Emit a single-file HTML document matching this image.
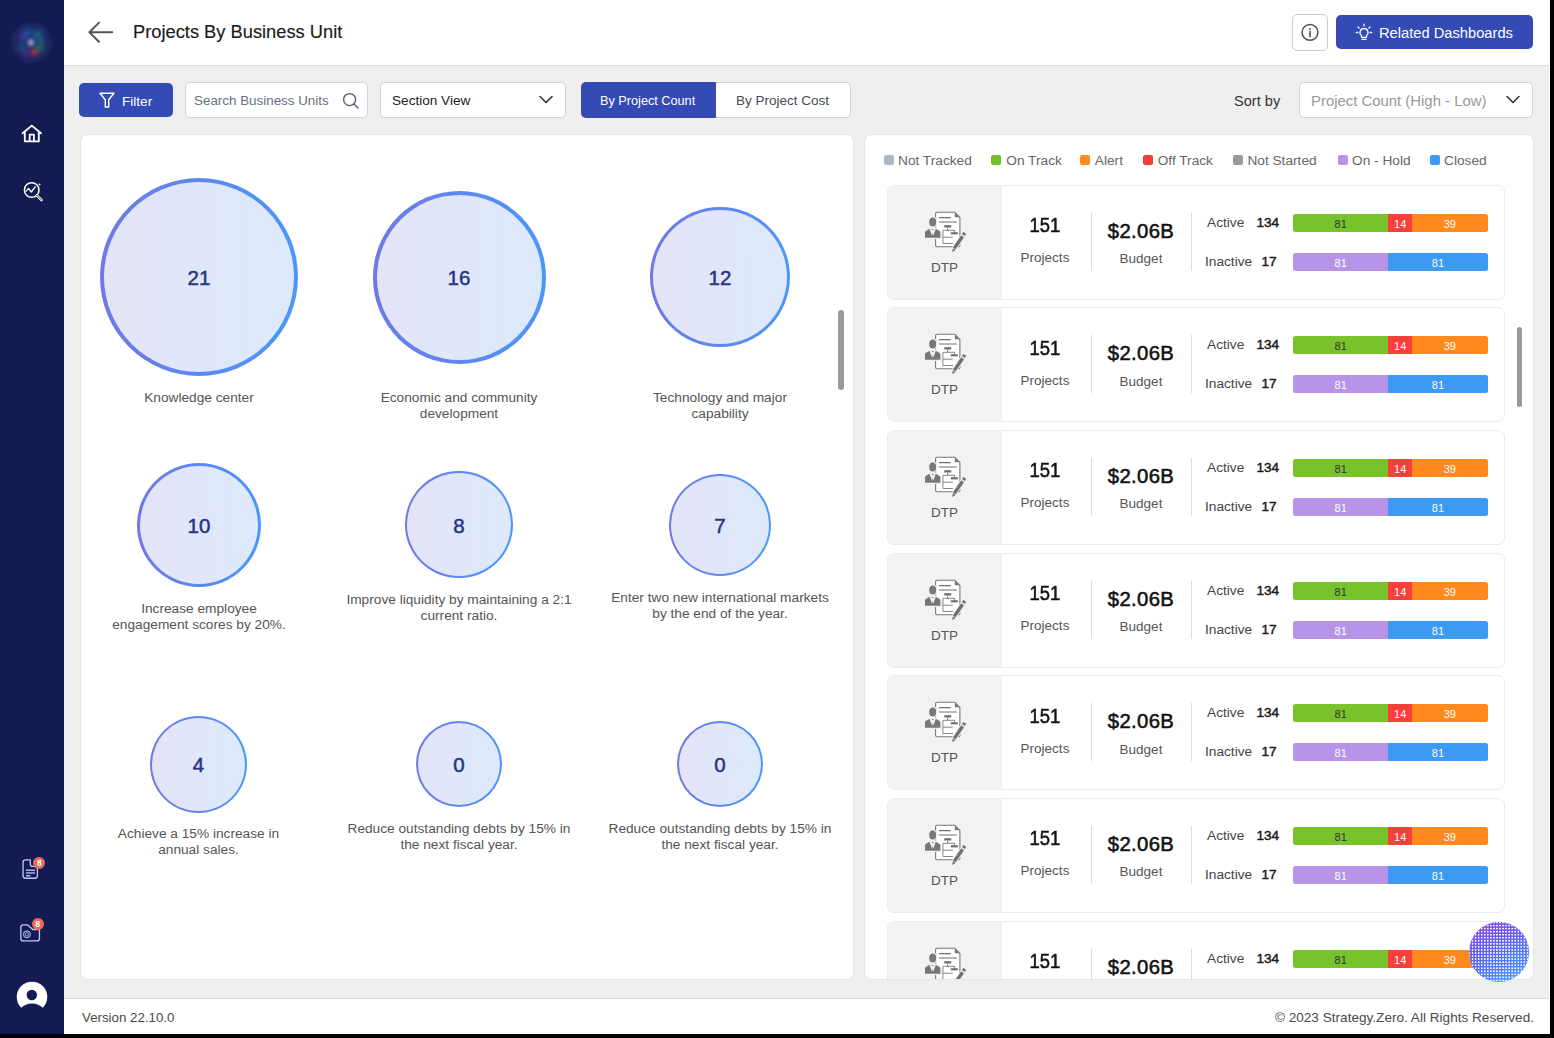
<!DOCTYPE html>
<html><head><meta charset="utf-8">
<style>
*{box-sizing:border-box;margin:0;padding:0}
html,body{width:1554px;height:1038px;overflow:hidden;background:#000;font-family:"Liberation Sans",sans-serif}
#app{position:absolute;left:0;top:0;width:1550px;height:1034px;background:#efefef;overflow:hidden}
.abs{position:absolute}
.t{position:absolute;white-space:nowrap}
#side{position:absolute;left:0;top:0;width:64px;height:1034px;background:#131b52}
#hdr{position:absolute;left:64px;top:0;width:1486px;height:66px;background:#fff;border-bottom:1px solid #dedede}
#ftr{position:absolute;left:64px;top:998px;width:1486px;height:36px;background:#fff;border-top:1px solid #d9d9d9}
.btnblue{position:absolute;background:#344ab4;border-radius:5px}
.box{position:absolute;background:#fff;border:1px solid #cfd3dc;border-radius:5px}
.panel{position:absolute;background:#fff;border-radius:7px;border:1px solid #e6e6e6}
.circ{position:absolute;border-radius:50%;border-style:solid;border-color:transparent;
 background:linear-gradient(90deg,#e4e4f8,#dde9fc) padding-box,linear-gradient(90deg,#6f78e6,#4b97fb) border-box;
 display:flex;align-items:center;justify-content:center;color:#263684;font-size:20.5px;-webkit-text-stroke:0.5px #263684;padding-top:2px}
.lbl{position:absolute;text-align:center;color:#555;font-size:13.7px;line-height:16px}
.card{position:absolute;width:618px;height:115px;border:1px solid #ebebeb;border-radius:7px;background:#fff;overflow:hidden}
.card .l{position:absolute;left:0;top:0;width:114px;height:113px;background:#f2f2f2}
.legt{font-size:13.7px;line-height:18px;color:#666;white-space:nowrap}
.ct{position:absolute;white-space:nowrap;line-height:20px}
.dtp{left:-1px;width:115px;text-align:center;top:72px;font-size:13.5px;color:#555}
.n151{left:107px;width:100px;text-align:center;top:29.5px;font-size:20.5px;color:#111;-webkit-text-stroke:0.55px #111;transform:scaleX(0.9)}
.sub{width:100px;text-align:center;top:62.5px;font-size:13.5px;color:#555}
.n2b{left:203px;width:100px;text-align:center;top:35px;font-size:20.3px;letter-spacing:0.35px;color:#111;-webkit-text-stroke:0.55px #111}
.dv{position:absolute;top:27px;width:1px;height:58px;background:#dcdcdc}
.act{left:319px;top:27px;font-size:13.7px;color:#444}
.bn{font-size:13.6px;color:#1a1a1a;-webkit-text-stroke:0.45px #1a1a1a}
.bar{position:absolute;left:405px;height:18px;width:194.6px;display:flex;border-radius:2.5px;overflow:hidden}
.bar i{display:block;height:18px;font-style:normal;font-size:11px;line-height:20px;text-align:center;color:#fff}
</style></head><body>
<div id="app">
  <div id="side"></div>
<div class="abs" style="left:11.399999999999999px;top:21.5px;width:41.0px;height:41.0px;border-radius:50%;background:rgba(75,85,160,0.2);filter:blur(1.2px)"></div>
<div class="abs" style="left:27.5px;top:39.4px;width:6.4px;height:6.4px;border-radius:50%;background:rgba(190,200,250,0.95);filter:blur(2px)"></div>
<div class="abs" style="left:23.8px;top:28.3px;width:8.4px;height:8.4px;border-radius:50%;background:rgba(25,95,190,0.75);filter:blur(2.5px)"></div>
<div class="abs" style="left:33.3px;top:30.3px;width:8.4px;height:8.4px;border-radius:50%;background:rgba(20,130,150,0.7);filter:blur(2.5px)"></div>
<div class="abs" style="left:35.0px;top:42.5px;width:9.0px;height:9.0px;border-radius:50%;background:rgba(25,140,100,0.7);filter:blur(2.5px)"></div>
<div class="abs" style="left:30.7px;top:48.2px;width:7.6px;height:7.6px;border-radius:50%;background:rgba(200,60,60,0.8);filter:blur(2.2px)"></div>
<div class="abs" style="left:23px;top:49px;width:8px;height:8px;border-radius:50%;background:rgba(95,50,160,0.6);filter:blur(2.5px)"></div>
<div class="abs" style="left:17.5px;top:42.5px;width:8px;height:8px;border-radius:50%;background:rgba(25,100,150,0.65);filter:blur(2.5px)"></div>
<div class="abs" style="left:18.5px;top:33px;width:8px;height:8px;border-radius:50%;background:rgba(100,100,190,0.45);filter:blur(2.5px)"></div>
<div class="abs" style="left:36.5px;top:37.0px;width:7.0px;height:7.0px;border-radius:50%;background:rgba(40,130,170,0.6);filter:blur(2.5px)"></div>
<svg class="abs" style="left:20px;top:123px" width="24" height="21" viewBox="0 0 24 21"><path d="M2.6 10.3L11.8 2.6L21 10.3M4.8 8.4V18.3H18.8V8.4M9.7 18.3V11.6H13.9V18.3" fill="none" stroke="#fff" stroke-width="1.8" stroke-linejoin="round" stroke-linecap="round"/></svg>
<svg class="abs" style="left:20px;top:178px" width="26" height="26" viewBox="0 0 26 26"><circle cx="11.7" cy="12" r="7.3" fill="none" stroke="#fff" stroke-width="1.5"/><path d="M16.8 17.3L21.6 22.1" stroke="#fff" stroke-width="2.6" stroke-linecap="round"/><path d="M16.8 17.3L21.6 22.1" stroke="#131b52" stroke-width="0.9" stroke-linecap="round"/><path d="M5.6 13.6L8.6 10.4L11.3 14L15.6 8.4" fill="none" stroke="#fff" stroke-width="1.3" stroke-linejoin="round"/><circle cx="19.6" cy="6.4" r="0.9" fill="#fff"/></svg>
<svg class="abs" style="left:18px;top:855px" width="30" height="30" viewBox="0 0 30 30"><path d="M12.3 4.85H7.5Q5.05 4.85 5.05 7.3V20.8Q5.05 23.25 7.5 23.25H16.9Q19.35 23.25 19.35 20.8V11.4H14.8Q12.3 11.4 12.3 8.9Z" fill="none" stroke="#c3c9f2" stroke-width="1.3" stroke-linejoin="round"/><path d="M8 15.2H17M8 18H17M8 20.7H12.6" stroke="#aab3ee" stroke-width="1.5"/></svg>
<div class="abs" style="left:33.3px;top:857px;width:12px;height:12px;border-radius:50%;background:#ec6a56;color:#fff;font-size:8.5px;line-height:12px;text-align:center;font-weight:bold">8</div>
<svg class="abs" style="left:17px;top:920px" width="30" height="26" viewBox="0 0 30 26"><path d="M10.4 4.85H6.3Q3.85 4.85 3.85 7.3V18.5Q3.85 20.95 6.3 20.95H20Q22.45 20.95 22.45 18.5V9.5H15.7Z" fill="none" stroke="#c3c9f2" stroke-width="1.3" stroke-linejoin="round"/><circle cx="9.9" cy="14.3" r="1.7" fill="none" stroke="#aab3ee" stroke-width="0.9"/><circle cx="9.9" cy="14.3" r="3.3" fill="none" stroke="#aab3ee" stroke-width="1.1"/></svg>
<div class="abs" style="left:31.7px;top:918.3px;width:12px;height:12px;border-radius:50%;background:#ec6a56;color:#fff;font-size:8.5px;line-height:12px;text-align:center;font-weight:bold">8</div>
<svg class="abs" style="left:16px;top:979px" width="32" height="32" viewBox="0 0 32 32"><circle cx="16" cy="17.9" r="15.25" fill="#fff"/><circle cx="15.8" cy="16" r="5.2" fill="#131b52"/><circle cx="16" cy="40.5" r="16" fill="#131b52"/></svg>
  <div id="hdr"></div>
  <svg class="abs" style="left:86px;top:20px" width="30" height="25" viewBox="0 0 30 25"><path d="M26.3 12.2H3.8M13 2.6L3.4 12.2L13 21.8" fill="none" stroke="#555" stroke-width="2" stroke-linecap="round" stroke-linejoin="round"/></svg>
  <div class="t" style="left:133px;top:20.4px;font-size:18.3px;line-height:24px;color:#1a1a1a;-webkit-text-stroke:0.15px #1a1a1a">Projects By Business Unit</div>
  <div class="box" style="left:1292px;top:14px;width:36px;height:37px;border-color:#c9ccd6"></div>
  <svg class="abs" style="left:1300px;top:22px" width="20" height="20" viewBox="0 0 20 20"><circle cx="10" cy="10.4" r="7.9" fill="none" stroke="#4a5060" stroke-width="1.5"/><circle cx="10" cy="7" r="1" fill="#4a5060"/><path d="M10 9.6v5.2" stroke="#4a5060" stroke-width="1.6" stroke-linecap="round"/></svg>
  <div class="btnblue" style="left:1336px;top:15px;width:197px;height:34px"></div>
  <svg class="abs" style="left:1354px;top:22px" width="20" height="20" viewBox="0 0 20 20"><g fill="none" stroke="#fff" stroke-width="1.3" stroke-linecap="round"><path d="M10 6.5a4 4 0 0 0-2.4 7.2v1.6h4.8v-1.6A4 4 0 0 0 10 6.5z"/><path d="M8 17.3h4"/><path d="M10 2.2v1.6M4 5l1.1 1.1M16 5l-1.1 1.1M2.3 10.5h1.5M16.2 10.5h1.5"/></g></svg>
  <div class="t" style="left:1379px;top:23.7px;font-size:14.7px;line-height:18px;color:#fff">Related Dashboards</div>
  <div class="btnblue" style="left:79px;top:83px;width:94px;height:34px"></div>
  <svg class="abs" style="left:98px;top:91px" width="18" height="18" viewBox="0 0 18 18"><path d="M2 2.2h14l-5.3 6.6v7.2H7.3V8.8z" fill="none" stroke="#fff" stroke-width="1.4" stroke-linejoin="round"/></svg>
  <div class="t" style="left:122px;top:92.5px;font-size:13.6px;line-height:18px;color:#fff">Filter</div>
  <div class="box" style="left:185px;top:82px;width:183px;height:36px"></div>
  <div class="t" style="left:194px;top:91.7px;font-size:13.4px;line-height:18px;color:#667085">Search Business Units</div>
  <svg class="abs" style="left:341px;top:91px" width="20" height="20" viewBox="0 0 20 20"><circle cx="8.6" cy="8.6" r="6" fill="none" stroke="#555d6e" stroke-width="1.4"/><path d="M13 13l4 4" stroke="#555d6e" stroke-width="1.4" stroke-linecap="round"/></svg>
  <div class="box" style="left:380px;top:82px;width:186px;height:36px"></div>
  <div class="t" style="left:392px;top:92px;font-size:13.6px;line-height:18px;color:#222">Section View</div>
  <svg class="abs" style="left:538px;top:93px" width="16" height="14" viewBox="0 0 16 14"><path d="M2 3.5l6 6l6-6" fill="none" stroke="#333" stroke-width="1.6" stroke-linecap="round" stroke-linejoin="round"/></svg>
  <div class="box" style="left:581px;top:82px;width:270px;height:36px"></div>
  <div class="abs" style="left:581px;top:82px;width:135px;height:36px;background:#344ab4;border-radius:5px 0 0 5px"></div>
  <div class="t" style="left:600px;top:92px;font-size:12.7px;line-height:18px;color:#fff">By Project Count</div>
  <div class="t" style="left:736px;top:91.6px;font-size:13.5px;line-height:18px;color:#444b5a">By Project Cost</div>
  <div class="t" style="left:1234px;top:91.6px;font-size:14.6px;line-height:18px;color:#333">Sort by</div>
  <div class="box" style="left:1299px;top:82px;width:234px;height:36px"></div>
  <div class="t" style="left:1311px;top:91.5px;font-size:14.9px;line-height:18px;color:#999">Project Count (High - Low)</div>
  <svg class="abs" style="left:1505px;top:93px" width="16" height="14" viewBox="0 0 16 14"><path d="M2 3.5l6 6l6-6" fill="none" stroke="#333" stroke-width="1.6" stroke-linecap="round" stroke-linejoin="round"/></svg>
  <div id="ftr"></div>
  <div class="t" style="left:82px;top:1009px;font-size:13.3px;line-height:18px;color:#4a4a4a">Version 22.10.0</div>
  <div class="t" style="left:1272px;top:1009px;width:262px;text-align:right;font-size:13.6px;line-height:18px;color:#4a4a4a">© 2023 Strategy.Zero. All Rights Reserved.</div>
  <div class="panel" style="left:80px;top:134px;width:774px;height:846px"></div>
  <div class="circ" style="left:100.00px;top:178.00px;width:198px;height:198px;border-width:4.95px">21</div>
  <div class="lbl" style="left:69px;top:389.5px;width:260px">Knowledge center</div>
  <div class="circ" style="left:372.50px;top:190.50px;width:173px;height:173px;border-width:4.33px">16</div>
  <div class="lbl" style="left:329px;top:389.5px;width:260px">Economic and community<br>development</div>
  <div class="circ" style="left:650.00px;top:207.00px;width:140px;height:140px;border-width:3.5px">12</div>
  <div class="lbl" style="left:590px;top:389.5px;width:260px">Technology and major<br>capability</div>
  <div class="circ" style="left:137.00px;top:462.50px;width:124px;height:124px;border-width:3.1px">10</div>
  <div class="lbl" style="left:69px;top:600.5px;width:260px">Increase employee<br>engagement scores by 20%.</div>
  <div class="circ" style="left:405.25px;top:470.75px;width:107.5px;height:107.5px;border-width:2.69px">8</div>
  <div class="lbl" style="left:329px;top:591.5px;width:260px">Improve liquidity by maintaining a 2:1<br>current ratio.</div>
  <div class="circ" style="left:668.75px;top:473.55px;width:102.5px;height:102.5px;border-width:2.56px">7</div>
  <div class="lbl" style="left:590px;top:589.5px;width:260px">Enter two new international markets<br>by the end of the year.</div>
  <div class="circ" style="left:150.00px;top:715.50px;width:97px;height:97px;border-width:2.43px">4</div>
  <div class="lbl" style="left:68.5px;top:826.0px;width:260px">Achieve a 15% increase in<br>annual sales.</div>
  <div class="circ" style="left:416.00px;top:721.00px;width:86px;height:86px;border-width:2.15px">0</div>
  <div class="lbl" style="left:329px;top:821.1px;width:260px">Reduce outstanding debts by 15% in<br>the next fiscal year.</div>
  <div class="circ" style="left:677.00px;top:721.00px;width:86px;height:86px;border-width:2.15px">0</div>
  <div class="lbl" style="left:590px;top:821.1px;width:260px">Reduce outstanding debts by 15% in<br>the next fiscal year.</div>
  <div class="abs" style="left:838px;top:310px;width:6px;height:80px;border-radius:3px;background:#9a9a9a"></div>
  <div class="panel" style="left:864px;top:134px;width:670px;height:846px"></div>
  <div class="abs" style="left:865px;top:135px;width:668px;height:844px;overflow:hidden;border-radius:6px"><div class="abs" style="left:-865px;top:-135px;width:1550px;height:1033px">
  <div class="abs" style="left:884px;top:155px;width:10px;height:10px;border-radius:2px;background:#a9b8c4"></div>
  <div class="abs legt" style="left:898px;top:151.7px">Not Tracked</div>
  <div class="abs" style="left:991.4px;top:155px;width:10px;height:10px;border-radius:2px;background:#72c02c"></div>
  <div class="abs legt" style="left:1006.3px;top:151.7px">On Track</div>
  <div class="abs" style="left:1080.2px;top:155px;width:10px;height:10px;border-radius:2px;background:#ff8a1f"></div>
  <div class="abs legt" style="left:1094.8px;top:151.7px">Alert</div>
  <div class="abs" style="left:1143px;top:155px;width:10px;height:10px;border-radius:2px;background:#f53b35"></div>
  <div class="abs legt" style="left:1157.7px;top:151.7px">Off Track</div>
  <div class="abs" style="left:1233px;top:155px;width:10px;height:10px;border-radius:2px;background:#9a9a9a"></div>
  <div class="abs legt" style="left:1247.4px;top:151.7px">Not Started</div>
  <div class="abs" style="left:1337.6px;top:155px;width:10px;height:10px;border-radius:2px;background:#b894e8"></div>
  <div class="abs legt" style="left:1352px;top:151.7px">On - Hold</div>
  <div class="abs" style="left:1429.6px;top:155px;width:10px;height:10px;border-radius:2px;background:#3d9bf3"></div>
  <div class="abs legt" style="left:1444px;top:151.7px">Closed</div>
  <div class="card" style="left:887px;top:184.60px"><div class="l"></div><svg class="abs" style="left:29.5px;top:19px" width="54" height="50" viewBox="0 0 54 50"><g stroke-linecap="butt">
<path d="M17.6 8.6Q17.6 7.2 19 7.2H36.8L41.9 12.5V40.3Q41.9 41.7 40.5 41.7H19Q17.6 41.7 17.6 40.3Z" fill="#fff" stroke="#777" stroke-width="1.1"/>
<path d="M36.8 7.4V12.2H41.6Z" fill="#777"/>
<path d="M21 12.6H32.7M21 17H38.8" stroke="#6f6f6f" stroke-width="1.1"/>
<rect x="26.2" y="20.2" width="7" height="2.3" fill="#707070"/>
<path d="M29.6 22.5V25.3M24.9 25.3H36.6V27.4M24.9 25.3V38.5H35M25 32.2H34.8" fill="none" stroke="#777" stroke-width="0.9"/>
<rect x="32.8" y="27.2" width="7" height="2.2" fill="#707070"/>
<ellipse cx="14.7" cy="16.9" rx="4.2" ry="5.2" fill="#777" stroke="#f2f2f2" stroke-width="1.4"/>
<path d="M6.4 33.4V27.2Q6.5 25.9 7.8 25.2L11.8 23L13.9 28.6L14.6 25.2L15.4 28.6L17.4 23L21.5 25.3Q23 26 23 27.4V33.4Z" fill="#777" stroke="#f2f2f2" stroke-width="1.2"/>
<path d="M14 24.5h1.4" stroke="#777" stroke-width="1.2"/>
<path d="M36.3 43.4L44.6 31.2" stroke="#f2f2f2" stroke-width="5.2"/>
<path d="M36.3 43.4L44.6 31.2" stroke="#707070" stroke-width="3.4"/>
<path d="M45.4 30L46.8 27.9" stroke="#707070" stroke-width="3.4"/>
<path d="M34 47L35 43.2L37.7 45Z" fill="#707070"/>
</g></svg>
<div class="ct dtp">DTP</div><div class="ct n151">151</div><div class="ct sub" style="left:107px">Projects</div>
<div class="dv" style="left:202.5px"></div><div class="ct n2b">$2.06B</div><div class="ct sub" style="left:203px;top:63.5px">Budget</div>
<div class="dv" style="left:302.5px"></div>
<div class="ct act">Active</div><div class="ct bn" style="left:368.5px;top:27px">134</div>
<div class="ct act" style="left:317px;top:66px">Inactive</div><div class="ct bn" style="left:373.5px;top:66px">17</div>
<div class="bar" style="top:28px"><i style="width:95.4px;background:#78c22b;color:#333">81</i><i style="width:23.6px;background:#f63f38">14</i><i style="width:75.6px;background:#fe891e">39</i></div>
<div class="bar" style="top:67.2px"><i style="width:95.4px;background:#b894e8">81</i><i style="width:99.2px;background:#3c9af2">81</i></div>
</div>
  <div class="card" style="left:887px;top:307.27px"><div class="l"></div><svg class="abs" style="left:29.5px;top:19px" width="54" height="50" viewBox="0 0 54 50"><g stroke-linecap="butt">
<path d="M17.6 8.6Q17.6 7.2 19 7.2H36.8L41.9 12.5V40.3Q41.9 41.7 40.5 41.7H19Q17.6 41.7 17.6 40.3Z" fill="#fff" stroke="#777" stroke-width="1.1"/>
<path d="M36.8 7.4V12.2H41.6Z" fill="#777"/>
<path d="M21 12.6H32.7M21 17H38.8" stroke="#6f6f6f" stroke-width="1.1"/>
<rect x="26.2" y="20.2" width="7" height="2.3" fill="#707070"/>
<path d="M29.6 22.5V25.3M24.9 25.3H36.6V27.4M24.9 25.3V38.5H35M25 32.2H34.8" fill="none" stroke="#777" stroke-width="0.9"/>
<rect x="32.8" y="27.2" width="7" height="2.2" fill="#707070"/>
<ellipse cx="14.7" cy="16.9" rx="4.2" ry="5.2" fill="#777" stroke="#f2f2f2" stroke-width="1.4"/>
<path d="M6.4 33.4V27.2Q6.5 25.9 7.8 25.2L11.8 23L13.9 28.6L14.6 25.2L15.4 28.6L17.4 23L21.5 25.3Q23 26 23 27.4V33.4Z" fill="#777" stroke="#f2f2f2" stroke-width="1.2"/>
<path d="M14 24.5h1.4" stroke="#777" stroke-width="1.2"/>
<path d="M36.3 43.4L44.6 31.2" stroke="#f2f2f2" stroke-width="5.2"/>
<path d="M36.3 43.4L44.6 31.2" stroke="#707070" stroke-width="3.4"/>
<path d="M45.4 30L46.8 27.9" stroke="#707070" stroke-width="3.4"/>
<path d="M34 47L35 43.2L37.7 45Z" fill="#707070"/>
</g></svg>
<div class="ct dtp">DTP</div><div class="ct n151">151</div><div class="ct sub" style="left:107px">Projects</div>
<div class="dv" style="left:202.5px"></div><div class="ct n2b">$2.06B</div><div class="ct sub" style="left:203px;top:63.5px">Budget</div>
<div class="dv" style="left:302.5px"></div>
<div class="ct act">Active</div><div class="ct bn" style="left:368.5px;top:27px">134</div>
<div class="ct act" style="left:317px;top:66px">Inactive</div><div class="ct bn" style="left:373.5px;top:66px">17</div>
<div class="bar" style="top:28px"><i style="width:95.4px;background:#78c22b;color:#333">81</i><i style="width:23.6px;background:#f63f38">14</i><i style="width:75.6px;background:#fe891e">39</i></div>
<div class="bar" style="top:67.2px"><i style="width:95.4px;background:#b894e8">81</i><i style="width:99.2px;background:#3c9af2">81</i></div>
</div>
  <div class="card" style="left:887px;top:429.94px"><div class="l"></div><svg class="abs" style="left:29.5px;top:19px" width="54" height="50" viewBox="0 0 54 50"><g stroke-linecap="butt">
<path d="M17.6 8.6Q17.6 7.2 19 7.2H36.8L41.9 12.5V40.3Q41.9 41.7 40.5 41.7H19Q17.6 41.7 17.6 40.3Z" fill="#fff" stroke="#777" stroke-width="1.1"/>
<path d="M36.8 7.4V12.2H41.6Z" fill="#777"/>
<path d="M21 12.6H32.7M21 17H38.8" stroke="#6f6f6f" stroke-width="1.1"/>
<rect x="26.2" y="20.2" width="7" height="2.3" fill="#707070"/>
<path d="M29.6 22.5V25.3M24.9 25.3H36.6V27.4M24.9 25.3V38.5H35M25 32.2H34.8" fill="none" stroke="#777" stroke-width="0.9"/>
<rect x="32.8" y="27.2" width="7" height="2.2" fill="#707070"/>
<ellipse cx="14.7" cy="16.9" rx="4.2" ry="5.2" fill="#777" stroke="#f2f2f2" stroke-width="1.4"/>
<path d="M6.4 33.4V27.2Q6.5 25.9 7.8 25.2L11.8 23L13.9 28.6L14.6 25.2L15.4 28.6L17.4 23L21.5 25.3Q23 26 23 27.4V33.4Z" fill="#777" stroke="#f2f2f2" stroke-width="1.2"/>
<path d="M14 24.5h1.4" stroke="#777" stroke-width="1.2"/>
<path d="M36.3 43.4L44.6 31.2" stroke="#f2f2f2" stroke-width="5.2"/>
<path d="M36.3 43.4L44.6 31.2" stroke="#707070" stroke-width="3.4"/>
<path d="M45.4 30L46.8 27.9" stroke="#707070" stroke-width="3.4"/>
<path d="M34 47L35 43.2L37.7 45Z" fill="#707070"/>
</g></svg>
<div class="ct dtp">DTP</div><div class="ct n151">151</div><div class="ct sub" style="left:107px">Projects</div>
<div class="dv" style="left:202.5px"></div><div class="ct n2b">$2.06B</div><div class="ct sub" style="left:203px;top:63.5px">Budget</div>
<div class="dv" style="left:302.5px"></div>
<div class="ct act">Active</div><div class="ct bn" style="left:368.5px;top:27px">134</div>
<div class="ct act" style="left:317px;top:66px">Inactive</div><div class="ct bn" style="left:373.5px;top:66px">17</div>
<div class="bar" style="top:28px"><i style="width:95.4px;background:#78c22b;color:#333">81</i><i style="width:23.6px;background:#f63f38">14</i><i style="width:75.6px;background:#fe891e">39</i></div>
<div class="bar" style="top:67.2px"><i style="width:95.4px;background:#b894e8">81</i><i style="width:99.2px;background:#3c9af2">81</i></div>
</div>
  <div class="card" style="left:887px;top:552.61px"><div class="l"></div><svg class="abs" style="left:29.5px;top:19px" width="54" height="50" viewBox="0 0 54 50"><g stroke-linecap="butt">
<path d="M17.6 8.6Q17.6 7.2 19 7.2H36.8L41.9 12.5V40.3Q41.9 41.7 40.5 41.7H19Q17.6 41.7 17.6 40.3Z" fill="#fff" stroke="#777" stroke-width="1.1"/>
<path d="M36.8 7.4V12.2H41.6Z" fill="#777"/>
<path d="M21 12.6H32.7M21 17H38.8" stroke="#6f6f6f" stroke-width="1.1"/>
<rect x="26.2" y="20.2" width="7" height="2.3" fill="#707070"/>
<path d="M29.6 22.5V25.3M24.9 25.3H36.6V27.4M24.9 25.3V38.5H35M25 32.2H34.8" fill="none" stroke="#777" stroke-width="0.9"/>
<rect x="32.8" y="27.2" width="7" height="2.2" fill="#707070"/>
<ellipse cx="14.7" cy="16.9" rx="4.2" ry="5.2" fill="#777" stroke="#f2f2f2" stroke-width="1.4"/>
<path d="M6.4 33.4V27.2Q6.5 25.9 7.8 25.2L11.8 23L13.9 28.6L14.6 25.2L15.4 28.6L17.4 23L21.5 25.3Q23 26 23 27.4V33.4Z" fill="#777" stroke="#f2f2f2" stroke-width="1.2"/>
<path d="M14 24.5h1.4" stroke="#777" stroke-width="1.2"/>
<path d="M36.3 43.4L44.6 31.2" stroke="#f2f2f2" stroke-width="5.2"/>
<path d="M36.3 43.4L44.6 31.2" stroke="#707070" stroke-width="3.4"/>
<path d="M45.4 30L46.8 27.9" stroke="#707070" stroke-width="3.4"/>
<path d="M34 47L35 43.2L37.7 45Z" fill="#707070"/>
</g></svg>
<div class="ct dtp">DTP</div><div class="ct n151">151</div><div class="ct sub" style="left:107px">Projects</div>
<div class="dv" style="left:202.5px"></div><div class="ct n2b">$2.06B</div><div class="ct sub" style="left:203px;top:63.5px">Budget</div>
<div class="dv" style="left:302.5px"></div>
<div class="ct act">Active</div><div class="ct bn" style="left:368.5px;top:27px">134</div>
<div class="ct act" style="left:317px;top:66px">Inactive</div><div class="ct bn" style="left:373.5px;top:66px">17</div>
<div class="bar" style="top:28px"><i style="width:95.4px;background:#78c22b;color:#333">81</i><i style="width:23.6px;background:#f63f38">14</i><i style="width:75.6px;background:#fe891e">39</i></div>
<div class="bar" style="top:67.2px"><i style="width:95.4px;background:#b894e8">81</i><i style="width:99.2px;background:#3c9af2">81</i></div>
</div>
  <div class="card" style="left:887px;top:675.28px"><div class="l"></div><svg class="abs" style="left:29.5px;top:19px" width="54" height="50" viewBox="0 0 54 50"><g stroke-linecap="butt">
<path d="M17.6 8.6Q17.6 7.2 19 7.2H36.8L41.9 12.5V40.3Q41.9 41.7 40.5 41.7H19Q17.6 41.7 17.6 40.3Z" fill="#fff" stroke="#777" stroke-width="1.1"/>
<path d="M36.8 7.4V12.2H41.6Z" fill="#777"/>
<path d="M21 12.6H32.7M21 17H38.8" stroke="#6f6f6f" stroke-width="1.1"/>
<rect x="26.2" y="20.2" width="7" height="2.3" fill="#707070"/>
<path d="M29.6 22.5V25.3M24.9 25.3H36.6V27.4M24.9 25.3V38.5H35M25 32.2H34.8" fill="none" stroke="#777" stroke-width="0.9"/>
<rect x="32.8" y="27.2" width="7" height="2.2" fill="#707070"/>
<ellipse cx="14.7" cy="16.9" rx="4.2" ry="5.2" fill="#777" stroke="#f2f2f2" stroke-width="1.4"/>
<path d="M6.4 33.4V27.2Q6.5 25.9 7.8 25.2L11.8 23L13.9 28.6L14.6 25.2L15.4 28.6L17.4 23L21.5 25.3Q23 26 23 27.4V33.4Z" fill="#777" stroke="#f2f2f2" stroke-width="1.2"/>
<path d="M14 24.5h1.4" stroke="#777" stroke-width="1.2"/>
<path d="M36.3 43.4L44.6 31.2" stroke="#f2f2f2" stroke-width="5.2"/>
<path d="M36.3 43.4L44.6 31.2" stroke="#707070" stroke-width="3.4"/>
<path d="M45.4 30L46.8 27.9" stroke="#707070" stroke-width="3.4"/>
<path d="M34 47L35 43.2L37.7 45Z" fill="#707070"/>
</g></svg>
<div class="ct dtp">DTP</div><div class="ct n151">151</div><div class="ct sub" style="left:107px">Projects</div>
<div class="dv" style="left:202.5px"></div><div class="ct n2b">$2.06B</div><div class="ct sub" style="left:203px;top:63.5px">Budget</div>
<div class="dv" style="left:302.5px"></div>
<div class="ct act">Active</div><div class="ct bn" style="left:368.5px;top:27px">134</div>
<div class="ct act" style="left:317px;top:66px">Inactive</div><div class="ct bn" style="left:373.5px;top:66px">17</div>
<div class="bar" style="top:28px"><i style="width:95.4px;background:#78c22b;color:#333">81</i><i style="width:23.6px;background:#f63f38">14</i><i style="width:75.6px;background:#fe891e">39</i></div>
<div class="bar" style="top:67.2px"><i style="width:95.4px;background:#b894e8">81</i><i style="width:99.2px;background:#3c9af2">81</i></div>
</div>
  <div class="card" style="left:887px;top:797.95px"><div class="l"></div><svg class="abs" style="left:29.5px;top:19px" width="54" height="50" viewBox="0 0 54 50"><g stroke-linecap="butt">
<path d="M17.6 8.6Q17.6 7.2 19 7.2H36.8L41.9 12.5V40.3Q41.9 41.7 40.5 41.7H19Q17.6 41.7 17.6 40.3Z" fill="#fff" stroke="#777" stroke-width="1.1"/>
<path d="M36.8 7.4V12.2H41.6Z" fill="#777"/>
<path d="M21 12.6H32.7M21 17H38.8" stroke="#6f6f6f" stroke-width="1.1"/>
<rect x="26.2" y="20.2" width="7" height="2.3" fill="#707070"/>
<path d="M29.6 22.5V25.3M24.9 25.3H36.6V27.4M24.9 25.3V38.5H35M25 32.2H34.8" fill="none" stroke="#777" stroke-width="0.9"/>
<rect x="32.8" y="27.2" width="7" height="2.2" fill="#707070"/>
<ellipse cx="14.7" cy="16.9" rx="4.2" ry="5.2" fill="#777" stroke="#f2f2f2" stroke-width="1.4"/>
<path d="M6.4 33.4V27.2Q6.5 25.9 7.8 25.2L11.8 23L13.9 28.6L14.6 25.2L15.4 28.6L17.4 23L21.5 25.3Q23 26 23 27.4V33.4Z" fill="#777" stroke="#f2f2f2" stroke-width="1.2"/>
<path d="M14 24.5h1.4" stroke="#777" stroke-width="1.2"/>
<path d="M36.3 43.4L44.6 31.2" stroke="#f2f2f2" stroke-width="5.2"/>
<path d="M36.3 43.4L44.6 31.2" stroke="#707070" stroke-width="3.4"/>
<path d="M45.4 30L46.8 27.9" stroke="#707070" stroke-width="3.4"/>
<path d="M34 47L35 43.2L37.7 45Z" fill="#707070"/>
</g></svg>
<div class="ct dtp">DTP</div><div class="ct n151">151</div><div class="ct sub" style="left:107px">Projects</div>
<div class="dv" style="left:202.5px"></div><div class="ct n2b">$2.06B</div><div class="ct sub" style="left:203px;top:63.5px">Budget</div>
<div class="dv" style="left:302.5px"></div>
<div class="ct act">Active</div><div class="ct bn" style="left:368.5px;top:27px">134</div>
<div class="ct act" style="left:317px;top:66px">Inactive</div><div class="ct bn" style="left:373.5px;top:66px">17</div>
<div class="bar" style="top:28px"><i style="width:95.4px;background:#78c22b;color:#333">81</i><i style="width:23.6px;background:#f63f38">14</i><i style="width:75.6px;background:#fe891e">39</i></div>
<div class="bar" style="top:67.2px"><i style="width:95.4px;background:#b894e8">81</i><i style="width:99.2px;background:#3c9af2">81</i></div>
</div>
  <div class="card" style="left:887px;top:920.62px"><div class="l"></div><svg class="abs" style="left:29.5px;top:19px" width="54" height="50" viewBox="0 0 54 50"><g stroke-linecap="butt">
<path d="M17.6 8.6Q17.6 7.2 19 7.2H36.8L41.9 12.5V40.3Q41.9 41.7 40.5 41.7H19Q17.6 41.7 17.6 40.3Z" fill="#fff" stroke="#777" stroke-width="1.1"/>
<path d="M36.8 7.4V12.2H41.6Z" fill="#777"/>
<path d="M21 12.6H32.7M21 17H38.8" stroke="#6f6f6f" stroke-width="1.1"/>
<rect x="26.2" y="20.2" width="7" height="2.3" fill="#707070"/>
<path d="M29.6 22.5V25.3M24.9 25.3H36.6V27.4M24.9 25.3V38.5H35M25 32.2H34.8" fill="none" stroke="#777" stroke-width="0.9"/>
<rect x="32.8" y="27.2" width="7" height="2.2" fill="#707070"/>
<ellipse cx="14.7" cy="16.9" rx="4.2" ry="5.2" fill="#777" stroke="#f2f2f2" stroke-width="1.4"/>
<path d="M6.4 33.4V27.2Q6.5 25.9 7.8 25.2L11.8 23L13.9 28.6L14.6 25.2L15.4 28.6L17.4 23L21.5 25.3Q23 26 23 27.4V33.4Z" fill="#777" stroke="#f2f2f2" stroke-width="1.2"/>
<path d="M14 24.5h1.4" stroke="#777" stroke-width="1.2"/>
<path d="M36.3 43.4L44.6 31.2" stroke="#f2f2f2" stroke-width="5.2"/>
<path d="M36.3 43.4L44.6 31.2" stroke="#707070" stroke-width="3.4"/>
<path d="M45.4 30L46.8 27.9" stroke="#707070" stroke-width="3.4"/>
<path d="M34 47L35 43.2L37.7 45Z" fill="#707070"/>
</g></svg>
<div class="ct dtp">DTP</div><div class="ct n151">151</div><div class="ct sub" style="left:107px">Projects</div>
<div class="dv" style="left:202.5px"></div><div class="ct n2b">$2.06B</div><div class="ct sub" style="left:203px;top:63.5px">Budget</div>
<div class="dv" style="left:302.5px"></div>
<div class="ct act">Active</div><div class="ct bn" style="left:368.5px;top:27px">134</div>
<div class="ct act" style="left:317px;top:66px">Inactive</div><div class="ct bn" style="left:373.5px;top:66px">17</div>
<div class="bar" style="top:28px"><i style="width:95.4px;background:#78c22b;color:#333">81</i><i style="width:23.6px;background:#f63f38">14</i><i style="width:75.6px;background:#fe891e">39</i></div>
<div class="bar" style="top:67.2px"><i style="width:95.4px;background:#b894e8">81</i><i style="width:99.2px;background:#3c9af2">81</i></div>
</div>
  <div class="abs" style="left:1517px;top:327px;width:5px;height:80px;border-radius:3px;background:#999"></div>
  </div></div>
  <div class="abs" style="left:1549px;top:0;width:1px;height:1034px;background:#fff"></div>
  <div class="abs" style="left:1469px;top:922px;width:60px;height:60px;border-radius:50%;background:linear-gradient(155deg,#9548ef 0%,#6a5cf3 35%,#5276f6 60%,#4aa8f8 100%);overflow:hidden"><div class="abs" style="left:-1px;top:-1px;width:62px;height:62px;background-image:radial-gradient(circle,rgba(255,255,255,1) 0.75px,rgba(255,255,255,0) 1.15px);background-size:3.05px 3.05px"></div></div>
</div>
</body></html>
